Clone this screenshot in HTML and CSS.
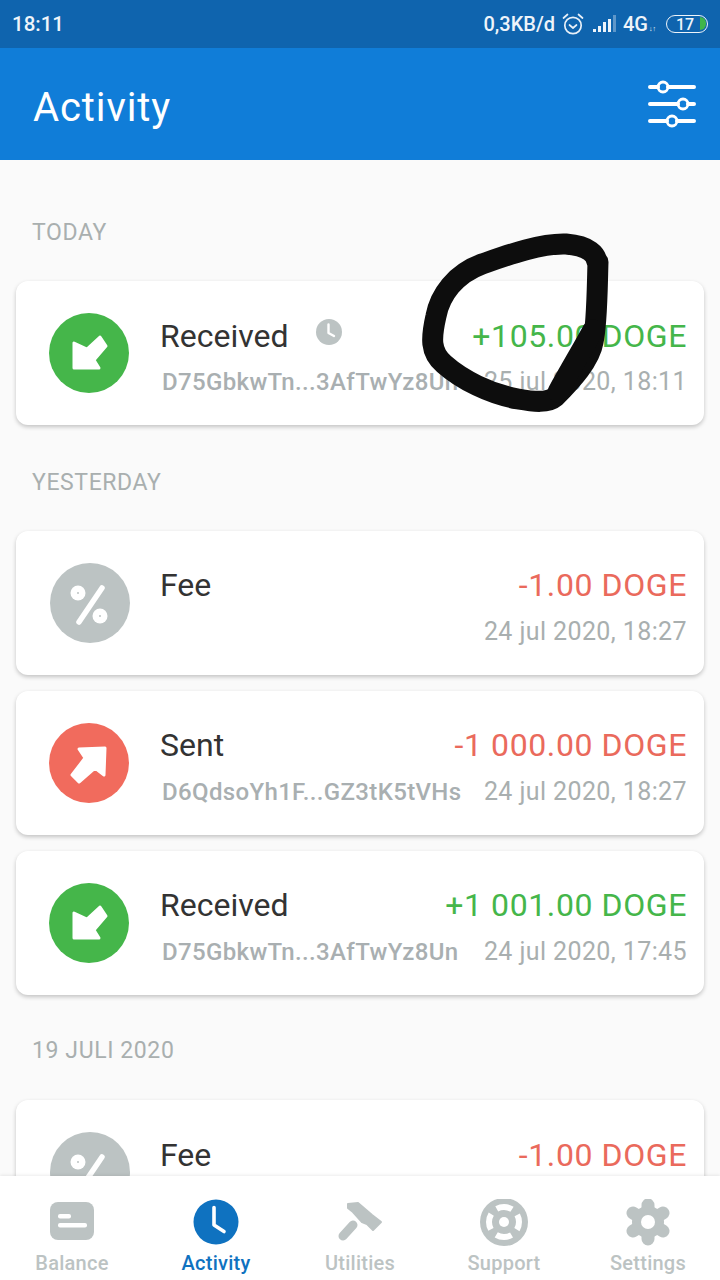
FILE: index.html
```html
<!DOCTYPE html>
<html lang="en">
<head>
  <meta charset="UTF-8">
  <title>Activity</title>
  <link rel="stylesheet" href="styles.css">
</head>
<body>
  <div class="screen">
    <div class="statusbar">
      <span class="clock">18:11</span>
      <div class="status-right">
        <span>0,3KB/d</span>
        <svg class="alarm" width="24" height="24" viewBox="0 0 24 24" fill="none" stroke="#e8f0f8" stroke-width="1.7" stroke-linecap="round" stroke-linejoin="round">
          <circle cx="12" cy="13.5" r="8.2"/>
          <path d="M8.5 13l3.5 3 3.500-3"/>
          <path d="M2.500 6l4-3.500M21.500 6l-4-3.500"/>
        </svg>
        <svg class="signal" width="26" height="20" viewBox="0 0 26 20">
          <rect x="0" y="15" width="3" height="3" fill="#eef4fa"/>
          <rect x="5" y="12" width="3" height="6" fill="#eef4fa"/>
          <rect x="10" y="8" width="3" height="10" fill="#eef4fa"/>
          <rect x="15" y="5" width="3" height="13" fill="#eef4fa"/>
          <rect x="20" y="1" width="3" height="17" fill="#5f97c9"/>
        </svg>
        <span class="net">4G<small>↓↑</small></span>
        <div class="battery"><span>17</span><i></i></div>
      </div>
    </div>

    <header class="appbar">
      <h1>Activity</h1>
      <svg width="48" height="48" viewBox="0 0 48 48" fill="none" stroke="#fff" stroke-width="4" stroke-linecap="round">
        <path d="M2 7h8M20 7h26"/>
        <circle cx="15" cy="7" r="5" stroke-width="2.800"/>
        <path d="M2 24h28M40 24h6"/>
        <circle cx="35" cy="24" r="5" stroke-width="2.800"/>
        <path d="M2 41h17M29 41h17"/>
        <circle cx="24" cy="41" r="5" stroke-width="2.800"/>
      </svg>
    </header>

    <main class="list">
      <section class="group">
        <h2>TODAY</h2>
        <div class="card">
          <div class="badge green">
            <svg width="80" height="80" viewBox="0 0 80 80"><use href="#arrow-in"/></svg>
          </div>
          <div class="card-body">
            <div class="row">
              <span class="title">Received</span>
              <svg class="pending" width="26" height="26" viewBox="0 0 26 26">
                <circle cx="13" cy="13" r="13" fill="#bcc3c3"/>
                <path d="M12.500 5.500v8.500l5.500 3" fill="none" stroke="#fff" stroke-width="2.400" stroke-linecap="round" stroke-linejoin="round"/>
              </svg>
              <span class="amount plus">+105.00 DOGE</span>
            </div>
            <div class="row">
              <span class="addr">D75GbkwTn...3AfTwYz8Un</span>
              <span class="date">25 jul 2020, 18:11</span>
            </div>
          </div>
        </div>
      </section>

      <section class="group">
        <h2>YESTERDAY</h2>
        <div class="card">
          <div class="badge grey">
            <svg width="80" height="80" viewBox="0 0 80 80"><use href="#percent"/></svg>
          </div>
          <div class="card-body">
            <div class="row">
              <span class="title">Fee</span>
              <span class="amount minus">-1.00 DOGE</span>
            </div>
            <div class="row">
              <span class="date">24 jul 2020, 18:27</span>
            </div>
          </div>
        </div>
        <div class="card">
          <div class="badge red">
            <svg width="80" height="80" viewBox="0 0 80 80"><use href="#arrow-out"/></svg>
          </div>
          <div class="card-body">
            <div class="row">
              <span class="title">Sent</span>
              <span class="amount minus">-1 000.00 DOGE</span>
            </div>
            <div class="row">
              <span class="addr">D6QdsoYh1F...GZ3tK5tVHs</span>
              <span class="date">24 jul 2020, 18:27</span>
            </div>
          </div>
        </div>
        <div class="card">
          <div class="badge green">
            <svg width="80" height="80" viewBox="0 0 80 80"><use href="#arrow-in"/></svg>
          </div>
          <div class="card-body">
            <div class="row">
              <span class="title">Received</span>
              <span class="amount plus">+1 001.00 DOGE</span>
            </div>
            <div class="row">
              <span class="addr">D75GbkwTn...3AfTwYz8Un</span>
              <span class="date">24 jul 2020, 17:45</span>
            </div>
          </div>
        </div>
      </section>

      <section class="group">
        <h2>19 JULI 2020</h2>
        <div class="card">
          <div class="badge grey">
            <svg width="80" height="80" viewBox="0 0 80 80"><use href="#percent"/></svg>
          </div>
          <div class="card-body">
            <div class="row">
              <span class="title">Fee</span>
              <span class="amount minus">-1.00 DOGE</span>
            </div>
          </div>
        </div>
      </section>
    </main>

    <nav class="tabbar">
      <div class="tab">
        <svg width="48" height="48" viewBox="0 0 48 48">
          <rect x="2" y="3" width="44" height="38" rx="8" fill="#bcc3c3"/>
          <rect x="10" y="15" width="13" height="4.500" rx="2" fill="#fff"/>
          <rect x="10" y="24" width="29" height="4.500" rx="2" fill="#fff"/>
        </svg>
        <span>Balance</span>
      </div>
      <div class="tab active">
        <svg width="48" height="48" viewBox="0 0 48 48">
          <circle cx="24" cy="23" r="22.500" fill="#0f72c0"/>
          <path d="M22 8.500v17.500l10 6.500" fill="none" stroke="#fff" stroke-width="3.600" stroke-linecap="round" stroke-linejoin="round"/>
        </svg>
        <span>Activity</span>
      </div>
      <div class="tab">
        <svg width="48" height="48" viewBox="0 0 48 48">
          <path d="M12 5L22 4 36 16 45 23 37 31 31 25 26 23 17 13 12 9z" fill="#bcc3c3" stroke="#bcc3c3" stroke-width="2" stroke-linejoin="round"/>
          <path d="M17 26L7 37" stroke="#bcc3c3" stroke-width="9" stroke-linecap="round"/>
        </svg>
        <span>Utilities</span>
      </div>
      <div class="tab">
        <svg width="48" height="48" viewBox="0 0 48 48">
          <circle cx="24" cy="23" r="24" fill="#bcc3c3"/>
          <circle cx="24" cy="23" r="15" fill="none" stroke="#fff" stroke-width="6" stroke-dasharray="16 7.560" stroke-dashoffset="8"/>
          <circle cx="24" cy="23" r="5" fill="#fff"/>
        </svg>
        <span>Support</span>
      </div>
      <div class="tab">
        <svg width="48" height="48" viewBox="0 0 48 48">
          <circle cx="24" cy="23" r="16" fill="#bcc3c3"/>
          <path d="M24 23V6M24 23v17M24 23L9 14M24 23l15-9M24 23L9 32M24 23l15 9" stroke="#bcc3c3" stroke-width="13" stroke-linecap="round"/>
          <circle cx="24" cy="23" r="7" fill="#fff"/>
        </svg>
        <span>Settings</span>
      </div>
    </nav>

    <!-- marker scribble drawn on top of the screenshot -->
    <svg class="scribble" width="720" height="1280" viewBox="0 0 720 1280" fill="none" stroke="#0d0d0d" stroke-width="21" stroke-linecap="round" stroke-linejoin="round">
      <path d="M597 262C596 255 590 246 566 244C540 243 505 256 482 264C455 274 440 295 436 316C431 338 430 352 444 364C462 380 490 394 518 399C535 402 548 403 555 397C572 380 590 360 593 342C597 325 597 295 598 262"/>
      <path d="M593 330C585 345 570 370 558 392"/>
    </svg>
  </div>

  <svg class="defs" width="0" height="0">
    <defs>
      <g id="arrow-in" fill="#fff" stroke="#fff" stroke-width="3" stroke-linejoin="round" stroke-linecap="round">
        <path d="M25 30L25 55 50 55 45 47 57 33 51 24 38 36z"/>
      </g>
      <g id="arrow-out" fill="#fff" stroke="#fff" stroke-width="3" stroke-linejoin="round" stroke-linecap="round">
        <path d="M56 25L30 26 36 35 23 52 30 59 46 45 55 52z"/>
      </g>
      <g id="percent" fill="#fff">
        <circle cx="28" cy="30" r="7.500"/>
        <circle cx="50" cy="53" r="7.500"/>
        <path d="M52 25L29 59" stroke="#fff" stroke-width="5.500" stroke-linecap="round"/>
        <circle cx="28" cy="30" r="1" fill="#bcc3c3"/>
        <circle cx="50" cy="53" r="1" fill="#bcc3c3"/>
      </g>
    </defs>
  </svg>
</body>
</html>
```

FILE: styles.css
```css
* {
  box-sizing: border-box;
}
html, body {
  margin: 0;
  padding: 0;
}
body {
  font-family: Roboto, "Liberation Sans", sans-serif;
}
.screen {
  position: relative;
  width: 720px;
  height: 1280px;
  overflow: hidden;
  display: flex;
  flex-direction: column;
  background: #fafafa;
}
.defs {
  position: absolute;
}

.statusbar {
  height: 48px;
  flex: none;
  display: flex;
  align-items: center;
  justify-content: space-between;
  padding: 0 12px;
  background: #0f64ae;
  color: #eef4fa;
  font-size: 20px;
  font-weight: 500;
}
.clock {
  font-size: 20.500px;
}
.status-right {
  display: flex;
  align-items: center;
}
.alarm {
  margin-left: 6px;
}
.signal {
  margin-left: 8px;
}
.net {
  margin-left: 4px;
  white-space: nowrap;
}
.net small {
  display: inline-block;
  width: 10px;
  font-size: 7px;
  margin-left: 1px;
}
.battery {
  position: relative;
  width: 42px;
  height: 18px;
  margin-left: 7px;
  border: 1.500px solid #eef4fa;
  border-radius: 9px;
  display: flex;
  align-items: center;
  justify-content: center;
  padding-right: 4px;
  font-size: 16px;
  line-height: 15px;
}
.battery i {
  position: absolute;
  right: 1px;
  top: 1px;
  width: 6px;
  height: 13px;
  background: #3fb54a;
  border-radius: 0 7px 7px 0;
}

.appbar {
  height: 112px;
  flex: none;
  display: flex;
  align-items: center;
  justify-content: space-between;
  padding: 0 24px 0 33px;
  background: #107dd8;
  color: #fff;
}
.appbar h1 {
  margin: 0;
  padding-top: 6px;
  font-size: 40px;
  font-weight: 400;
  letter-spacing: 0.9px;
}

.list {
  flex: 1;
  overflow: hidden;
  padding: 53px 16px 0;
}
.group {
  margin-bottom: 37.500px;
}
.group h2 {
  margin: 0 0 28px 16px;
  height: 40px;
  font-size: 23px;
  line-height: 40px;
  font-weight: 400;
  letter-spacing: 0.6px;
  color: #a9afaf;
}
.group:last-child {
  margin-top: -1.500px;
}
.group:last-child h2 {
  margin-bottom: 29.500px;
}
.card {
  height: 144px;
  margin-bottom: 16px;
  display: flex;
  background: #fff;
  border-radius: 12px;
  box-shadow: 0 2px 4px rgba(0, 0, 0, 0.22);
}
.group .card:last-child {
  margin-bottom: 0;
}
.badge {
  flex: none;
  width: 80px;
  height: 80px;
  margin: 32px 31px 0 33px;
  border-radius: 50%;
}
.badge svg {
  display: block;
}
.green {
  background: #45b64a;
}
.red {
  background: #f16b5d;
}
.grey {
  margin-left: 34px;
  margin-right: 30px;
  background: #bcc3c3;
}
.card-body {
  flex: 1;
  padding: 31.500px 17px 0 0;
}
.row {
  height: 46px;
  display: flex;
  align-items: center;
  justify-content: space-between;
  line-height: 46px;
}
.row:first-child {
  height: 46.500px;
}
.title {
  font-size: 32px;
  color: #333;
}
.pending {
  margin: -8px 0 0 27px;
}
.amount {
  margin-left: auto;
  font-size: 32px;
  letter-spacing: 0.6px;
}
.plus {
  color: #45b64a;
}
.minus {
  color: #ea6a5c;
}
.addr {
  margin-left: 2px;
  font-size: 24px;
  font-weight: 500;
  letter-spacing: 0.35px;
  color: #a9afb1;
}
.date {
  margin-left: auto;
  font-size: 25px;
  letter-spacing: 0.4px;
  color: #a9afaf;
}

.tabbar {
  position: relative;
  height: 104px;
  flex: none;
  display: flex;
  background: #fff;
  box-shadow: 0 -1px 3px rgba(0, 0, 0, 0.08);
}
.tab {
  flex: 1;
  display: flex;
  flex-direction: column;
  align-items: center;
  padding-top: 23px;
  font-size: 20px;
  font-weight: 500;
  letter-spacing: 0.25px;
  color: #bcc3c3;
}
.tab span {
  margin-top: 3px;
  line-height: 26px;
}
.active {
  color: #0f72c0;
}

.scribble {
  position: absolute;
  top: 0;
  left: 0;
}
```
